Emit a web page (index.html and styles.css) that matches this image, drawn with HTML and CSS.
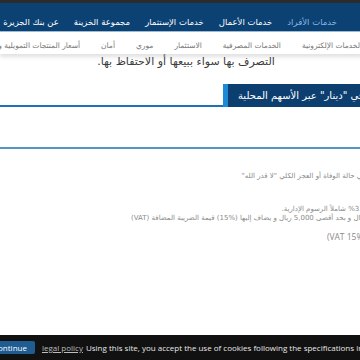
FILE: index.html
```html
<!DOCTYPE html>
<html lang="ar" dir="rtl">
<head>
    <meta charset="UTF-8">
    <meta name="viewport" content="width=device-width, initial-scale=1.0">
    <title>بنك الجزيرة - دينار</title>
    <link rel="stylesheet" href="styles.css">
</head>
<body>
    <div class="top-strip"></div>
    <nav class="main-nav">
        <a class="active">خدمات الأفراد</a>
        <a>خدمات الأعمال</a>
        <a>خدمات الإستثمار</a>
        <a>مجموعة الخزينة</a>
        <a>عن بنك الجزيرة</a>
        <a>فروع وأجهزة الصراف</a>
    </nav>
    <div class="sub-nav">
        <a>الخدمات الإلكترونية</a>
        <a>الخدمات المصرفية</a>
        <a>الاستثمار</a>
        <a>موري</a>
        <a>أمان</a>
        <a>أسعار المنتجات التمويلية و الادخارية</a>
    </div>

    <div class="content">
        <p class="lead">التصرف بها سواء ببيعها أو الاحتفاظ بها.</p>

        <div class="title-row">
            <span class="title-line"></span>
            <h2 class="title">الاستثمار في "دينار" عبر الأسهم المحلية</h2>
        </div>

        <div class="tab">التفاصيل</div>
        <div class="rule"></div>

        <div class="notes">
            <p class="note first">في حالة الوفاة أو العجز الكلي "لا قدر الله"</p>
            <p class="note gap">1.%3 شاملاً الرسوم الإدارية.</p>
            <p class="note">ريال و بحد أقصى 5,000 ريال و يضاف إليها (%15) قيمة الضريبة المضافة (VAT)</p>
            <p class="note vat">(VAT 15%)</p>
        </div>
    </div>

    <div class="cookie-bar">
        <button class="continue">Continue</button>
        <a class="policy">legal policy</a>
        <span class="cookie-text">Using this site, you accept the use of cookies following the specifications in</span>
    </div>
</body>
</html>
```

FILE: styles.css
```css
html, body {
    margin: 0;
    padding: 0;
    overflow: hidden;
    height: 360px;
}

body {
    font-family: "DejaVu Sans", "Open Sans", sans-serif;
    background-color: #ffffff;
    color: #333;
}

.top-strip {
    height: 3px;
    background-color: #2b2b2b;
}

.main-nav {
    display: flex;
    align-items: flex-end;
    gap: 15px;
    height: 29px;
    box-sizing: border-box;
    padding: 0 23px 4px 0;
    background-color: #0c4173;
    border-bottom: 1px solid #9dbbd6;
    white-space: nowrap;
}

.main-nav a {
    color: #ffffff;
    font-size: 8.5px;
}

.main-nav a.active {
    color: #86b8e4;
}

.sub-nav {
    position: relative;
    z-index: 2;
    display: flex;
    align-items: flex-end;
    gap: 21px;
    height: 22px;
    box-sizing: border-box;
    padding: 0 0 4px 0;
    margin-right: -2px;
    background-color: #ffffff;
    box-shadow: 0 3px 4px rgba(0, 0, 0, 0.12);
    white-space: nowrap;
}

.sub-nav a {
    color: #777;
    font-size: 7.5px;
}

.content {
    margin-right: -6px;
}

.lead {
    margin: 1px 0 0 0;
    text-align: center;
    font-size: 11px;
    line-height: 14px;
    color: #3c3c3c;
    padding-left: 6px;
}

.title-row {
    display: flex;
    direction: ltr;
    align-items: flex-end;
    margin-top: 15px;
    white-space: nowrap;
}

.title-line {
    flex: 0 0 223px;
    height: 2px;
    background-color: #1c72b8;
}

.title {
    flex: none;
    direction: rtl;
    margin: 0;
    height: 23px;
    box-sizing: border-box;
    padding: 0 10px 0 10px;
    border-left: 5px solid #1d8ad6;
    background-color: #0c3f6f;
    color: #ffffff;
    font-size: 10px;
    font-weight: normal;
    line-height: 23px;
}

.tab {
    margin: 6px -34px 0 0;
    font-size: 10px;
    line-height: 12px;
    color: #666;
}

.rule {
    margin-top: 22px;
    height: 2px;
    background-color: #5095c6;
}

.notes {
    padding-top: 23px;
}

.note {
    margin: 0;
    font-size: 7px;
    line-height: 9px;
    color: #8a8a8a;
    white-space: nowrap;
}

.note.gap {
    margin-top: 24px;
}

.note.vat {
    margin: 8px 0 0 0;
    font-family: "Open Sans", sans-serif;
    font-size: 8.5px;
    line-height: 11px;
}

.cookie-bar {
    position: fixed;
    left: 0;
    right: 0;
    bottom: 0;
    height: 25px;
    display: flex;
    direction: ltr;
    align-items: center;
    gap: 7px;
    background-color: #111111;
    font-family: "Open Sans", sans-serif;
    font-size: 8px;
    white-space: nowrap;
    overflow: hidden;
}

.continue {
    margin-left: -15px;
    height: 13px;
    padding: 0 8px;
    border: none;
    border-radius: 2px;
    background-color: #1f5c92;
    color: #ffffff;
    font-family: inherit;
    font-size: 8px;
}

.policy {
    color: #bdbdbd;
    text-decoration: underline;
}

.cookie-text {
    margin-left: -4px;
    color: #e8e8e8;
}
```
